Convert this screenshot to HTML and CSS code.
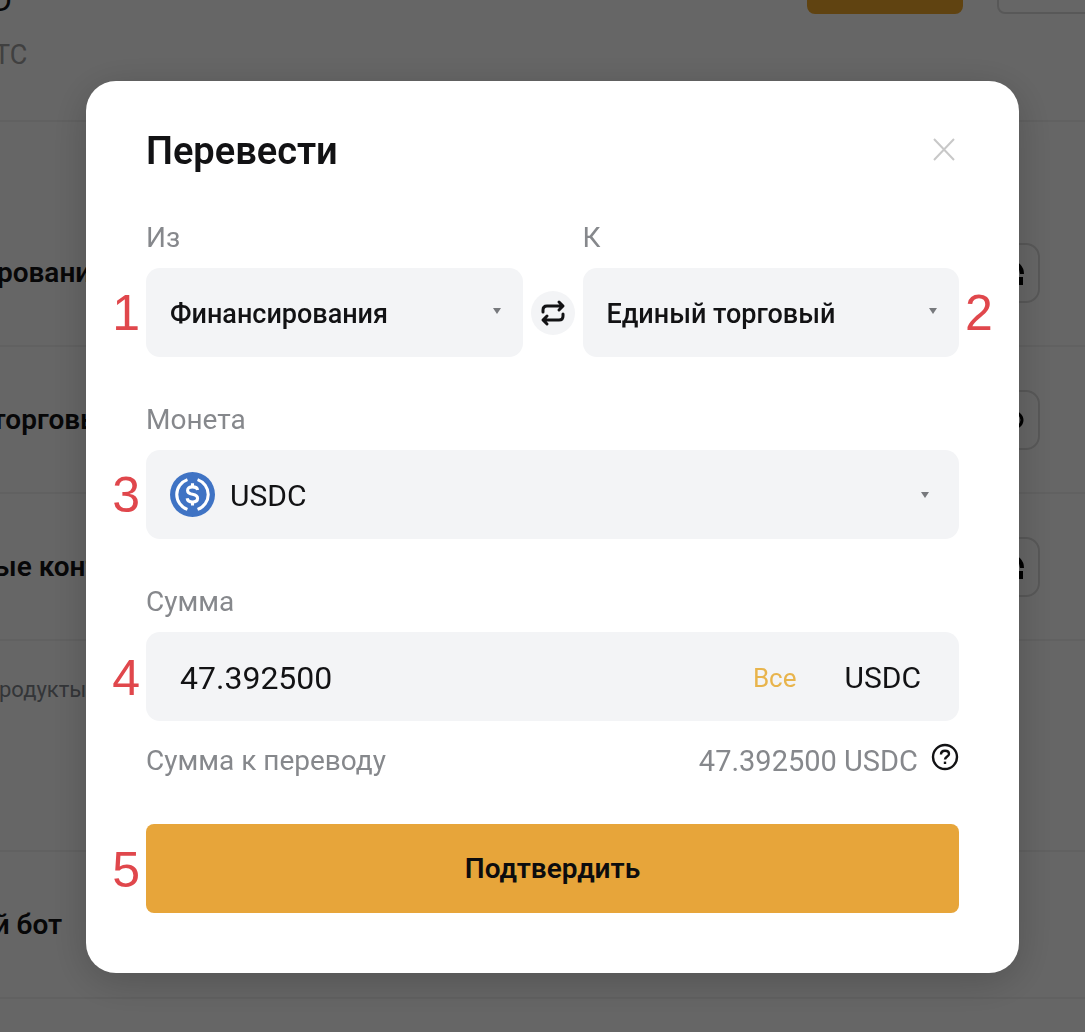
FILE: index.html
```html
<!DOCTYPE html>
<html lang="ru">
  <head>
    <meta charset="utf-8">
    <title>Перевести</title>
    <link rel="stylesheet" href="styles.css">
  </head>

  <body>
    <div class="page">
      <div class="page-header">
        <div class="balance">
          <div class="balance-main">0.00 USD</div>
          <div class="balance-sub">≈ 0.000 BTC</div>
        </div>
        <div class="page-actions">
          <button class="page-button gold"></button>
          <button class="page-button"></button>
        </div>
      </div>

      <div class="account-list">
        <div class="account">
          <span>Финансирования</span>
          <button class="account-button">
            <svg width="32" height="32" viewBox="0 0 32 32" fill="none" stroke="#000" stroke-width="4">
              <path d="M28 17A12 12 0 0 0 4 17M5 20v8M27 20v8" />
            </svg>
          </button>
        </div>
        <div class="account">
          <span>Единый торговый</span>
          <button class="account-button">
            <svg width="32" height="32" viewBox="0 0 32 32" fill="none" stroke="#000" stroke-width="3">
              <ellipse cx="16" cy="16" rx="12" ry="9" />
            </svg>
          </button>
        </div>
        <div class="account">
          <span>Инверсные контракты</span>
          <button class="account-button">
            <svg width="32" height="32" viewBox="0 0 32 32" fill="none" stroke="#000" stroke-width="4">
              <path d="M28 17A12 12 0 0 0 4 17M5 20v8M27 20v8" />
            </svg>
          </button>
        </div>
      </div>

      <div class="products">Торговые продукты</div>

      <div class="account">
        <span>Торговый бот</span>
      </div>
    </div>

    <div class="overlay">
      <form class="modal" role="dialog" aria-labelledby="modal-title">
        <div class="modal-header">
          <h1 id="modal-title">Перевести</h1>
          <button type="button" class="close-button" aria-label="Закрыть">
            <svg width="30" height="30" viewBox="0 0 30 30" fill="none" stroke="#c8c8c8" stroke-width="2">
              <path d="M5 3l20 21M25 3L5 24" />
            </svg>
          </button>
        </div>

        <div class="route">
          <div class="group">
            <label for="from">Из</label>
            <div class="field">
              <span class="step">1</span>
              <select id="from" class="account-select">
                <option>Финансирования</option>
                <option>Единый торговый</option>
              </select>
              <svg class="caret" width="8" height="6" viewBox="0 0 8 6"><path d="M0 0h8L4 6z" /></svg>
            </div>
          </div>

          <button type="button" class="swap-button" aria-label="Поменять местами">
            <svg width="28" height="28" viewBox="0 0 28 28" fill="none" stroke="#121214" stroke-width="3" stroke-linecap="round" stroke-linejoin="round">
              <path d="M4 13V11Q4 7 8 7H23M20 3l4 4l-4 4" />
              <path d="M24 15v2Q24 21 20 21H5M8 17l-4 4l4 4" />
            </svg>
          </button>

          <div class="group">
            <label for="to">К</label>
            <div class="field">
              <span class="step step-right">2</span>
              <select id="to" class="account-select">
                <option>Единый торговый</option>
                <option>Финансирования</option>
              </select>
              <svg class="caret" width="8" height="6" viewBox="0 0 8 6"><path d="M0 0h8L4 6z" /></svg>
            </div>
          </div>
        </div>

        <div class="group">
          <label for="coin">Монета</label>
          <div class="field coin-field">
            <span class="step">3</span>
            <svg class="coin-icon" width="45" height="45" viewBox="0 0 32 32" fill="none">
              <circle cx="16" cy="16" r="16" fill="#3f73c4" />
              <g stroke="#fff" stroke-width="2.2">
                <path d="M12.4 5.4A11.2 11.2 0 0 0 12.4 26.6" />
                <path d="M19.6 5.4A11.2 11.2 0 0 1 19.6 26.6" />
                <path d="M19.6 12.8C19.4 11.2 18 10.6 16 10.6C13.8 10.6 12.5 11.6 12.5 13.1C12.5 14.8 13.8 15.4 16 15.8C18.4 16.2 19.6 17 19.6 18.7C19.6 20.4 18.2 21.3 16 21.3C13.7 21.3 12.4 20.4 12.2 18.7" />
                <path d="M16 8v2.8M16 21v2.8" />
              </g>
            </svg>
            <select id="coin">
              <option>USDC</option>
            </select>
            <svg class="caret" width="8" height="6" viewBox="0 0 8 6"><path d="M0 0h8L4 6z" /></svg>
          </div>
        </div>

        <div class="group">
          <label for="amount">Сумма</label>
          <div class="field amount-field">
            <span class="step">4</span>
            <input type="text" id="amount" inputmode="decimal" value="47.392500">
            <button type="button" class="all-button">Все</button>
            <span class="currency">USDC</span>
          </div>
        </div>

        <div class="summary">
          <span>Сумма к переводу</span>
          <span class="summary-value">47.392500 USDC</span>
          <svg width="28" height="28" viewBox="0 0 28 28" fill="none" stroke="#121214" stroke-width="2.4">
            <circle cx="14" cy="14" r="12" />
            <path d="M10 11.5C10 9 11.7 7.8 14 7.8C16.3 7.8 18 9 18 11C18 13.4 14 13.6 14 16.6" />
            <path d="M14 18.6v2.4" />
          </svg>
        </div>

        <div class="confirm">
          <span class="step">5</span>
          <button type="submit" class="confirm-button">Подтвердить</button>
        </div>
      </form>
    </div>
  </body>
</html>
```

FILE: styles.css
```css
* {
  box-sizing: border-box;
}

body {
  margin: 0;
  overflow: hidden;
  background: #fff;
  color: #121214;
  font-family: Roboto, "Liberation Sans", sans-serif;
}

button,
input,
select {
  padding: 0;
  border: none;
  background: none;
  color: inherit;
  font-family: inherit;
}

button {
  cursor: pointer;
}

/* page under the dialog, scrolled a little */
.page {
  margin: -50px -68px 0 -119px;
}

.page-header {
  display: flex;
  justify-content: space-between;
  height: 172px;
  border-bottom: 2px solid #f2f2f2;
}

.balance {
  padding-top: 32px;
}

.balance-main {
  font-size: 32px;
  line-height: 36px;
}

.balance-sub {
  margin-top: 19px;
  font-size: 27px;
  line-height: 36px;
  color: #a0a0a0;
}

.page-actions {
  display: flex;
  gap: 34px;
}

.page-button {
  width: 156px;
  height: 64px;
  border: 2px solid #dcdcdc;
  border-radius: 8px;
}

.gold {
  border-color: #f0a82c;
  background: #f0a82c;
}

.account-list {
  padding-top: 78px;
}

.account {
  display: flex;
  align-items: center;
  justify-content: space-between;
  height: 147px;
  padding-right: 113px;
  border-bottom: 2px solid #f2f2f2;
  font-size: 28px;
  font-weight: 600;
}

.account-button {
  display: flex;
  align-items: center;
  justify-content: center;
  width: 60px;
  height: 60px;
  border: 2px solid #dcdcdc;
  border-radius: 14px;
}

.products {
  height: 211px;
  padding-top: 31px;
  border-bottom: 2px solid #f2f2f2;
  font-size: 22px;
  line-height: 36px;
  color: #81858c;
}

.overlay {
  position: fixed;
  inset: 0;
  padding: 81px 66px 58px 86px;
  background: rgba(0, 0, 0, 0.6);
}

.modal {
  padding: 40px 60px 60px;
  border-radius: 30px;
  background: #fff;
  box-shadow: 0 8px 40px rgba(0, 0, 0, 0.2);
}

.modal-header {
  display: flex;
  align-items: center;
  justify-content: space-between;
  margin-bottom: 39px;
}

h1 {
  margin: 0;
  font-size: 38px;
  font-weight: 600;
  line-height: 60px;
}

.close-button {
  height: 30px;
}

.route {
  display: grid;
  grid-template-columns: 1fr 44px 1fr;
  gap: 8px;
  align-items: end;
}

.group {
  margin-bottom: 45px;
}

.group label {
  display: block;
  margin-bottom: 12px;
  font-size: 28px;
  line-height: 36px;
  color: #86888c;
}

.field {
  position: relative;
  display: flex;
  align-items: center;
  height: 89px;
  border-radius: 14px;
  background: #f3f4f6;
}

select {
  flex: 1;
  height: 100%;
  appearance: none;
  padding: 2px 0 0 15px;
  font-size: 30px;
}

.account-select {
  padding-left: 24px;
  font-size: 27px;
  font-weight: 500;
}

.caret {
  position: absolute;
  right: 22px;
  margin-bottom: 4px;
  fill: #77797d;
  pointer-events: none;
}

.coin-field {
  padding-left: 24px;
}

.coin-field .caret {
  right: 30px;
  margin-bottom: 0;
}

/* step numbers beside the fields */
.step {
  position: absolute;
  right: 100%;
  padding: 2px 6px 0;
  font-family: "Liberation Sans", Arial, sans-serif;
  font-size: 50px;
  line-height: 89px;
  color: #e0474c;
}

.step-right {
  right: auto;
  left: 100%;
}

.swap-button {
  display: flex;
  align-items: center;
  justify-content: center;
  width: 44px;
  height: 44px;
  margin-bottom: 67px;
  border-radius: 50%;
  background: #f3f4f6;
}

.amount-field {
  gap: 48px;
  padding: 2px 38px 0 34px;
}

.amount-field input {
  flex: 1;
  min-width: 0;
  height: 100%;
  font-size: 32px;
}

.all-button {
  font-size: 26px;
  color: #e8b44c;
}

.currency {
  font-size: 30px;
}

.group:has(.amount-field) {
  margin-bottom: 22px;
}

.summary {
  display: flex;
  align-items: flex-start;
  margin-bottom: 45px;
  font-size: 28px;
  line-height: 36px;
  color: #86888c;
}

.summary-value {
  margin: 0 13px 0 auto;
  font-size: 29px;
}

.confirm {
  position: relative;
}

.confirm-button {
  width: 100%;
  height: 89px;
  border-radius: 8px;
  background: #e7a53a;
  color: #0c0c0e;
  font-size: 28px;
  font-weight: 600;
}
```
